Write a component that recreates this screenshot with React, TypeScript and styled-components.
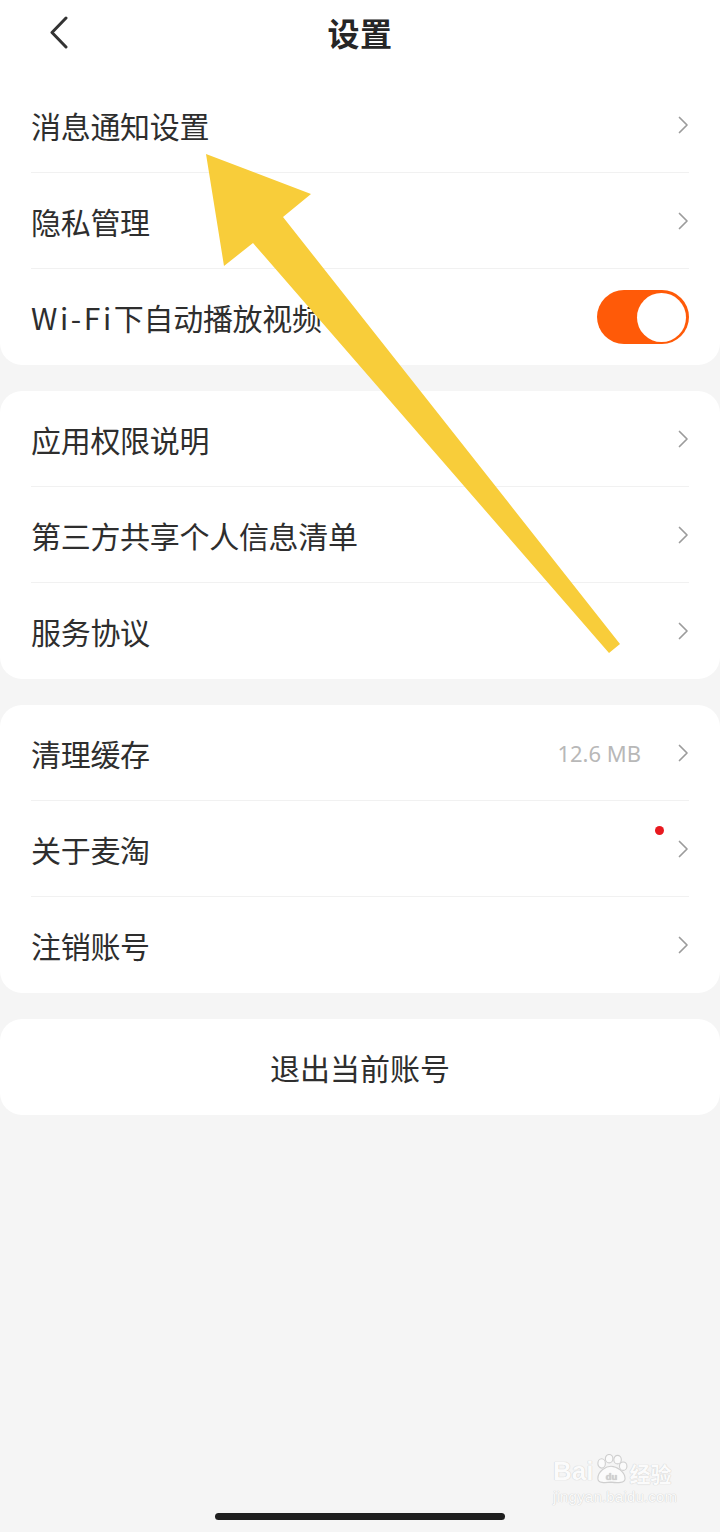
import React from "react";
import styled, { createGlobalStyle } from "styled-components";

const GlobalStyle = createGlobalStyle`
  * { box-sizing: border-box; }
  html, body { margin: 0; padding: 0; background: #f5f5f5; }
  body {
    font-family: "Noto Sans CJK SC", "Noto Sans", "Liberation Sans", sans-serif;
    -webkit-font-smoothing: antialiased;
  }
`;

const Page = styled.div`
  position: relative;
  width: 720px;
  min-height: 1532px;
  background: #f5f5f5;
  display: flex;
  flex-direction: column;
  gap: 26px;
  overflow: hidden;
`;

const TopBlock = styled.div`
  display: flex;
  flex-direction: column;
  background: #fff;
  border-radius: 0 0 22px 22px;
`;

const Header = styled.header`
  position: relative;
  height: 77px;
  padding-bottom: 13px;
  display: flex;
  align-items: center;
  justify-content: center;
`;

const BackButton = styled.button`
  position: absolute;
  left: 44px;
  top: 9px;
  width: 30px;
  height: 46px;
  border: none;
  background: none;
  padding: 0;
  display: flex;
  align-items: center;
  justify-content: center;
`;

const Title = styled.h1`
  margin: 0;
  font-size: 32px;
  font-weight: 700;
  color: #262626;
  letter-spacing: 0.5px;
`;

const Card = styled.section`
  background: #fff;
  border-radius: 22px;
  padding: 0 31px;
  display: flex;
  flex-direction: column;
`;

const Group = styled.div`
  padding: 0 31px;
  display: flex;
  flex-direction: column;
`;

const Row = styled.div<{ $last?: boolean }>`
  height: 96px;
  display: flex;
  align-items: center;
  justify-content: space-between;
  border-bottom: ${(p) => (p.$last ? "none" : "1px solid #f1f1f1")};
`;

const Label = styled.span`
  font-size: 30px;
  color: #2e2e2e;
  line-height: 1;
  letter-spacing: -0.3px;
`;

const Latin = styled.span`
  letter-spacing: 2.6px;
`;

const Trailing = styled.div`
  display: flex;
  align-items: center;
  gap: 37px;
`;

const Value = styled.span`
  font-size: 22px;
  color: #b8b8b8;
  font-family: "Noto Sans", "Liberation Sans", sans-serif;
`;

const ChevronBox = styled.span`
  position: relative;
  width: 11px;
  height: 18px;
  display: flex;
`;

const Dot = styled.span`
  position: absolute;
  left: -23px;
  top: -14px;
  width: 9px;
  height: 9px;
  border-radius: 50%;
  background: #e8191f;
`;

const Toggle = styled.span`
  width: 92px;
  height: 54px;
  border-radius: 27px;
  background: #ff5a08;
  display: flex;
  align-items: center;
  justify-content: flex-end;
  padding: 0 3px;
`;

const Knob = styled.span`
  width: 49px;
  height: 49px;
  border-radius: 50%;
  background: #fff;
`;

const ActionCard = styled.button`
  height: 96px;
  border: none;
  border-radius: 22px;
  background: #fff;
  font-family: inherit;
  font-size: 30px;
  color: #2e2e2e;
  display: flex;
  align-items: center;
  justify-content: center;
  padding: 0;
`;

const Footer = styled.div`
  margin-top: auto;
  height: 60px;
  display: flex;
  align-items: flex-end;
  justify-content: center;
  padding-bottom: 12px;
`;

const HomeBar = styled.span`
  width: 290px;
  height: 7px;
  border-radius: 4px;
  background: #1f1f1f;
`;

const ArrowLayer = styled.svg`
  position: absolute;
  left: 0;
  top: 0;
  pointer-events: none;
`;

const Watermark = styled.div`
  position: absolute;
  left: 553px;
  top: 1454px;
  display: flex;
  flex-direction: column;
  align-items: flex-start;
  color: #fbfbfb;
  text-shadow: 0 0 1px #cfcfcf, 0 0 1px #cfcfcf;
  pointer-events: none;
`;

const MarkTop = styled.div`
  display: flex;
  align-items: flex-end;
  font-family: "Liberation Sans", sans-serif;
  font-size: 26px;
  font-weight: 700;
  line-height: 1;
`;

const MarkCn = styled.span`
  font-family: "Noto Sans CJK SC", sans-serif;
  font-size: 21px;
  font-weight: 700;
`;

const MarkUrl = styled.div`
  margin-top: 4px;
  font-family: "Liberation Sans", sans-serif;
  font-size: 15px;
  letter-spacing: 0.2px;
`;

const Chevron = () => (
  <svg width="11" height="18" viewBox="0 0 11 18">
    <polyline points="1.5,1.5 9,9 1.5,16.5" fill="none" stroke="#9c9c9c" strokeWidth="1.7" strokeLinecap="round" strokeLinejoin="round" />
  </svg>
);

const Paw = () => (
  <svg width="36" height="30" viewBox="0 0 38 32">
    <g fill="#fbfbfb" stroke="#cfcfcf" strokeWidth="1.2">
      <ellipse cx="9" cy="10" rx="4" ry="5" />
      <ellipse cx="17" cy="5" rx="4" ry="4.5" />
      <ellipse cx="26" cy="6" rx="4" ry="4.5" />
      <ellipse cx="32" cy="13" rx="4" ry="4.5" />
      <path d="M5 26 C5 18 14 13 19 13 C25 13 34 19 34 26 C34 31 26 31 19 30 C12 31 5 31 5 26 Z" />
    </g>
    <text x="19.5" y="28" fontSize="10" textAnchor="middle" fill="#cfcfcf" fontFamily="Liberation Sans, sans-serif" fontWeight="700">du</text>
  </svg>
);

type Item = { label: string; latin?: string; value?: string; dot?: boolean; toggle?: boolean };

const group1: Item[] = [
  { label: "消息通知设置" },
  { label: "隐私管理" },
  { label: "下自动播放视频", latin: "Wi-Fi", toggle: true },
];
const group2: Item[] = [
  { label: "应用权限说明" },
  { label: "第三方共享个人信息清单" },
  { label: "服务协议" },
];
const group3: Item[] = [
  { label: "清理缓存", value: "12.6 MB" },
  { label: "关于麦淘", dot: true },
  { label: "注销账号" },
];

const Rows = ({ items }: { items: Item[] }) => (
  <>
    {items.map((it, i) => (
      <Row key={it.label} $last={i === items.length - 1}>
        <Label>
          {it.latin && <Latin>{it.latin}</Latin>}
          {it.label}
        </Label>
        {it.toggle ? (
          <Toggle>
            <Knob />
          </Toggle>
        ) : (
          <Trailing>
            {it.value && <Value>{it.value}</Value>}
            <ChevronBox>
              {it.dot && <Dot />}
              <Chevron />
            </ChevronBox>
          </Trailing>
        )}
      </Row>
    ))}
  </>
);

export default function App() {
  return (
    <>
      <GlobalStyle />
      <Page>
        <TopBlock>
          <Header>
            <BackButton aria-label="返回">
              <svg width="20" height="33" viewBox="0 0 20 33">
                <polyline points="17,2 3,16.5 17,31" fill="none" stroke="#333" strokeWidth="3" strokeLinecap="round" strokeLinejoin="round" />
              </svg>
            </BackButton>
            <Title>设置</Title>
          </Header>
          <Group>
            <Rows items={group1} />
          </Group>
        </TopBlock>
        <Card>
          <Rows items={group2} />
        </Card>
        <Card>
          <Rows items={group3} />
        </Card>
        <ActionCard>退出当前账号</ActionCard>
        <Footer>
          <HomeBar />
        </Footer>
        <ArrowLayer width="720" height="700" viewBox="0 0 720 700">
          <polygon
            points="206,154 311,194 283,217 620,644 609,653 253,243 224,266"
            fill="#f8cd3a"
          />
        </ArrowLayer>
        <Watermark>
          <MarkTop>
            <span>Bai</span>
            <Paw />
            <MarkCn>经验</MarkCn>
          </MarkTop>
          <MarkUrl>jingyan.baidu.com</MarkUrl>
        </Watermark>
      </Page>
    </>
  );
}
